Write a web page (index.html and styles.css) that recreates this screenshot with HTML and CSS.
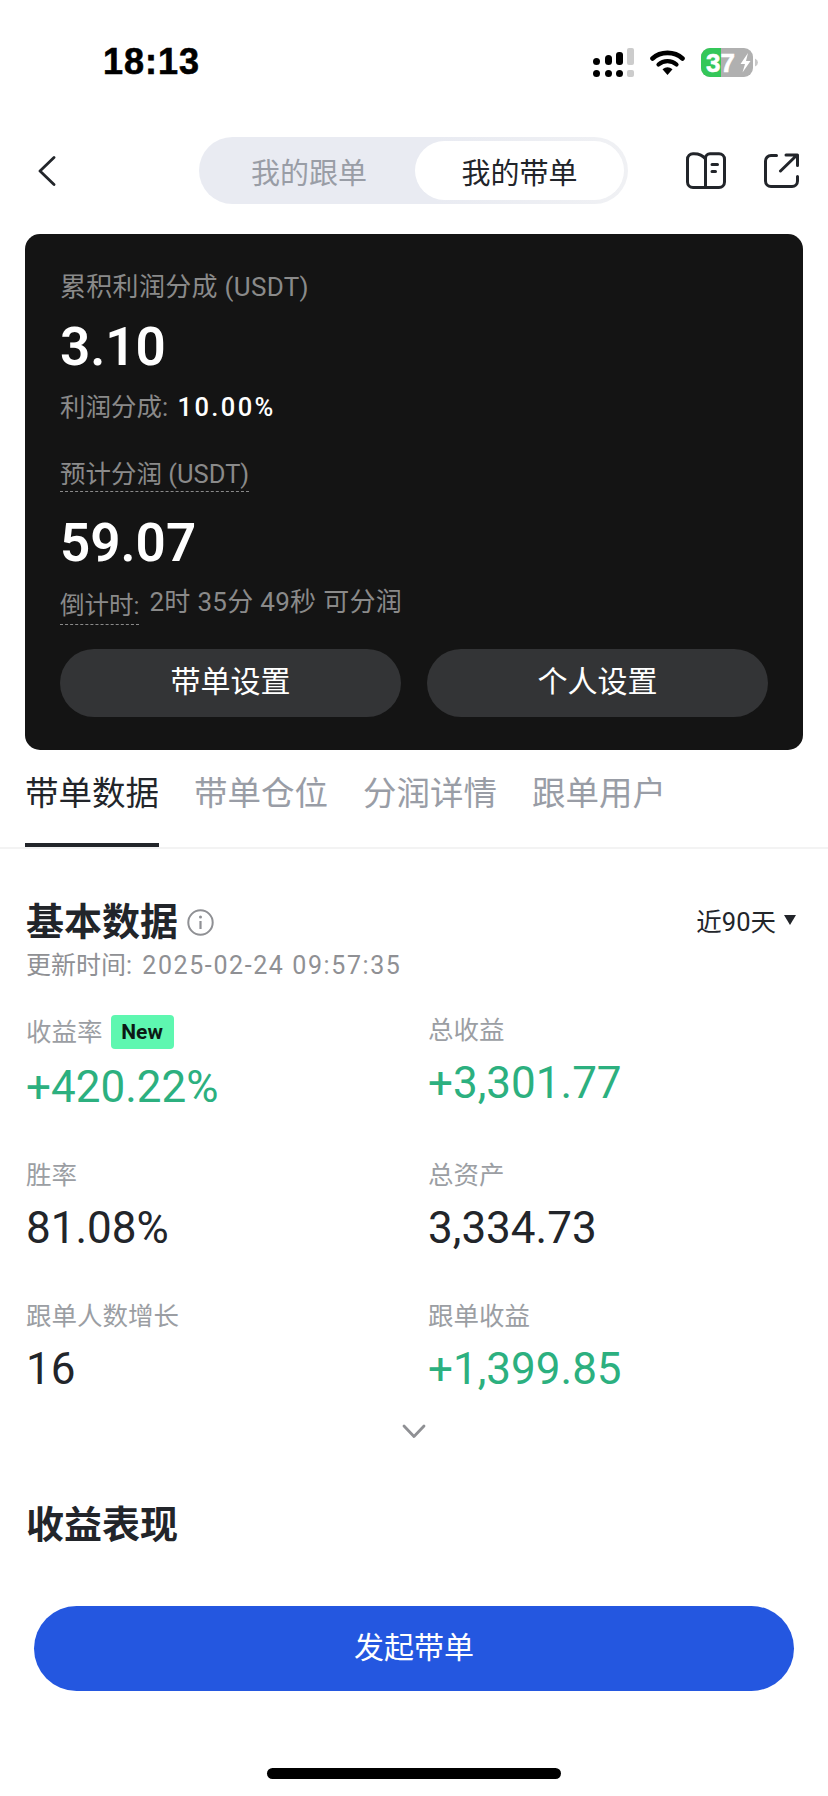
FILE: index.html
```html
<!DOCTYPE html>
<html lang="zh">
<head>
<meta charset="utf-8">
<title>我的带单</title>
<link rel="stylesheet" href="styles.css">
</head>
<body>
<div class="page">
  <div class="status">
    <span class="time">18:13</span>
    <div class="status-icons">
      <svg class="signal" width="41" height="29" viewBox="0 0 41 29">
        <rect x="0" y="10" width="7" height="7" rx="3.5" fill="#000"/><rect x="12" y="7" width="7" height="10" rx="3.5" fill="#000"/><rect x="23" y="4" width="7" height="13" rx="3" fill="#000"/><rect x="34" y="0" width="7" height="17" rx="2" fill="#ccc"/>
        <rect x="0" y="22" width="7" height="7" rx="3.5" fill="#000"/><rect x="12" y="22" width="7" height="7" rx="3.5" fill="#000"/><rect x="23" y="22" width="7" height="7" rx="3.5" fill="#000"/><rect x="34" y="22" width="7" height="7" rx="2" fill="#ccc"/>
      </svg>
      <svg class="wifi" width="35" height="26" viewBox="0 0 35 26">
        <path d="M2.5 9.5C10.5 2 24.500 2 32.500 9.500" fill="none" stroke="#000" stroke-width="4.600" stroke-linecap="round"/>
        <path d="M8.500 15.500C13.500 11 21.500 11 26.500 15.500" fill="none" stroke="#000" stroke-width="4.200" stroke-linecap="round"/>
        <path d="M12.500 20.200Q17.500 16.400 22.500 20.200L17.500 26Z" fill="#000"/>
      </svg>
      <svg class="battery" width="58" height="29" viewBox="0 0 58 29">
        <rect x="0" y="0" width="52" height="29" rx="9" fill="#b0b0b0"/>
        <path d="M9 0H20V29H9A9 9 0 0 1 0 20V9A9 9 0 0 1 9 0Z" fill="#34c759"/>
        <path d="M54 10.500Q57 12 57 14.500T54 18.500Z" fill="#c8c8c8"/>
        <text class="bat-text" x="5" y="24">37</text>
        <path d="M47 5L39.500 16H44L41.500 24.500L49.500 13H45Z" fill="#fff"/>
      </svg>
    </div>
  </div>

  <div class="nav">
    <svg class="back" width="18" height="30" viewBox="0 0 18 30"><path d="M16 1.500L2 15L16 28.500" fill="none" stroke="#22252a" stroke-width="2.800" stroke-linecap="round" stroke-linejoin="round"/></svg>
    <div class="switch">
      <span class="switch-item">我的跟单</span>
      <span class="switch-item switch-active">我的带单</span>
    </div>
    <div class="nav-icons">
      <svg width="40" height="37" viewBox="0 0 40 37"><path d="M19.500 7C17 3.500 13 1.700 8 1.700H7A5.500 5.500 0 0 0 1.500 7.200V30A5.500 5.500 0 0 0 7 35.500H33A5.500 5.500 0 0 0 38.500 30V7.200A5.500 5.500 0 0 0 33 1.700H24A4.500 4.500 0 0 0 19.500 6.200V35.500" fill="none" stroke="#22252a" stroke-width="3" stroke-linejoin="round"/><path d="M26 12.500H31.500M26 19.500H29.500" stroke="#22252a" stroke-width="3" stroke-linecap="round"/></svg>
      <svg width="35" height="35" viewBox="0 0 35 35"><path d="M12.500 2.500H7A5.500 5.500 0 0 0 1.500 8V28A5.500 5.500 0 0 0 7 33.500H28A5.500 5.500 0 0 0 33.500 28V23.500" fill="none" stroke="#22252a" stroke-width="3" stroke-linecap="round"/><path d="M16.500 18L33 2M22 2H33.500V12.500" fill="none" stroke="#22252a" stroke-width="3" stroke-linecap="round" stroke-linejoin="round"/></svg>
    </div>
  </div>

  <section class="card">
    <div class="card-label label-top">累积利润分成 (USDT)</div>
    <div class="card-value">3.10</div>
    <div class="card-label share">利润分成: <b class="share-val">10.00%</b></div>
    <div class="card-label dashed est">预计分润 (USDT)</div>
    <div class="card-value est-val">59.07</div>
    <div class="countdown">
      <span class="card-label dashed count-label">倒计时:</span>
      <span class="card-label count-text">2时 35分 49秒 可分润</span>
    </div>
    <div class="card-btns">
      <button class="card-btn">带单设置</button>
      <button class="card-btn">个人设置</button>
    </div>
  </section>

  <nav class="tabs">
    <span class="tab tab-active">带单数据</span>
    <span class="tab">带单仓位</span>
    <span class="tab">分润详情</span>
    <span class="tab">跟单用户</span>
  </nav>

  <section class="section">
    <div class="title-row">
      <h2 class="title">基本数据</h2>
      <svg class="info" width="27" height="27" viewBox="0 0 27 27"><circle cx="13.500" cy="13.500" r="12.200" fill="none" stroke="#8f9094" stroke-width="2"/><path d="M13.500 12V20" stroke="#8f9094" stroke-width="2.200"/><circle cx="13.500" cy="8" r="1.500" fill="#8f9094"/></svg>
      <div class="range">近90天<span class="caret"></span></div>
    </div>
    <div class="updated">更新时间: <span class="stamp">2025-02-24 09:57:35</span></div>
    <div class="stats">
      <div class="stat">
        <div class="stat-label rate-label">收益率<span class="badge">New</span></div>
        <div class="stat-value up rate-value">+420.22%</div>
      </div>
      <div class="stat">
        <div class="stat-label">总收益</div>
        <div class="stat-value up">+3,301.77</div>
      </div>
      <div class="stat">
        <div class="stat-label">胜率</div>
        <div class="stat-value">81.08%</div>
      </div>
      <div class="stat">
        <div class="stat-label">总资产</div>
        <div class="stat-value">3,334.73</div>
      </div>
      <div class="stat">
        <div class="stat-label">跟单人数增长</div>
        <div class="stat-value">16</div>
      </div>
      <div class="stat">
        <div class="stat-label">跟单收益</div>
        <div class="stat-value up">+1,399.85</div>
      </div>
    </div>
    <svg class="more" width="24" height="15" viewBox="0 0 24 15"><path d="M2 2L12 12.500L22 2" fill="none" stroke="#8f9094" stroke-width="2.800" stroke-linecap="round" stroke-linejoin="round"/></svg>
    <h2 class="title perf">收益表现</h2>
  </section>

  <button class="cta">发起带单</button>
  <div class="home-bar"></div>
</div>
</body>
</html>
```
FILE: styles.css
```css
* { box-sizing: border-box; }
html, body { margin: 0; padding: 0; background: #fff; }
body { font-family: Roboto, "Noto Sans CJK SC", sans-serif; color: #22252a; }
.page { width: 828px; height: 1796px; overflow: hidden; display: flex; flex-direction: column; }

.status { height: 124px; display: flex; align-items: center; justify-content: space-between; padding: 0 69px 0 103px; flex: none; }
.time { font-family: "Liberation Sans", sans-serif; font-weight: 700; font-size: 36px; letter-spacing: 1px; color: #000; -webkit-text-stroke: 0.6px #000; }
.status-icons { display: flex; align-items: center; gap: 16px; }
.bat-text { font-family: "Liberation Sans", sans-serif; font-weight: 700; font-size: 26px; fill: #fff; stroke: #fff; stroke-width: 0.6px; }

.nav { height: 67px; margin-top: 13px; display: flex; align-items: center; padding: 0 29px 0 38px; flex: none; }
.back { flex: none; }
.switch { margin-left: 143px; width: 429px; height: 67px; border-radius: 34px; background: linear-gradient(90deg, #e9ebf2 0%, #e9ebf2 55%, #f0f1f4 100%); padding: 4px; display: flex; flex: none; }
.switch-item { flex: 1; display: flex; align-items: center; justify-content: center; font-size: 29px; color: #999da6; border-radius: 30px; height: 59px; }
.switch-active { flex: none; width: 209px; background: #fff; color: #22252a; }
.nav-icons { margin-left: 58px; display: flex; align-items: center; gap: 38px; }

.card { flex: none; margin: 30px 25px 0 25px; height: 516px; background: #141414; border-radius: 15px; padding: 35px 35px 0 35px; }
.card-label { font-size: 25.5px; line-height: 36px; color: #8a8a8a; }
.label-top { font-size: 26px; letter-spacing: 0.3px; }
.card-value { font-size: 53px; line-height: 60px; font-weight: 600; color: #fff; margin-top: 12px; }
.share { margin-top: 12px; }
.share-val { font-weight: 500; color: #fff; letter-spacing: 2.4px; margin-left: 3px; }
.dashed { display: inline-block; line-height: 33px; border-bottom: 1px dashed #8a8a8a; }
.est { display: block; width: fit-content; margin-top: 33px; }
.est-val { margin-top: 21px; }
.countdown { display: flex; margin-top: 15px; align-items: flex-start; gap: 10px; }
.count-label { font-size: 24.5px; line-height: 36px; }
.count-text { margin-top: -4px; font-size: 26px; letter-spacing: 0.3px; }
.card-btns { display: flex; gap: 26px; margin-top: 24px; }
.card-btn { flex: 1; height: 68px; border: 0; border-radius: 34px; background: #333436; color: #fff; font-family: inherit; font-size: 30px; line-height: 64px; padding: 0 0 2px; }

.tabs { flex: none; height: 99px; display: flex; gap: 35px; padding: 0 25px; border-bottom: 2px solid #f3f3f3; }
.tab { height: 97px; width: 134px; padding-top: 21px; font-size: 33.5px; line-height: 46px; color: #999da6; text-align: center; white-space: nowrap; }
.tab-active { color: #22252a; border-bottom: 4px solid #22252a; }

.section { flex: none; padding: 0 26px 0 26px; }
.title-row { display: flex; align-items: center; margin-top: 48px; height: 50px; }
.title { margin: 0; font-size: 38px; line-height: 50px; font-weight: 700; color: #22252a; }
.info { margin-left: 9px; }
.range { margin-left: auto; font-size: 25.5px; color: #22252a; display: flex; align-items: center; gap: 8px; margin-right: 6px; margin-top: -5px; }
.caret { width: 0; height: 0; border-left: 6px solid transparent; border-right: 6px solid transparent; border-top: 10px solid #22252a; }
.updated { margin-top: 1px; font-size: 25px; line-height: 36px; color: #8f9094; }
.stamp { letter-spacing: 1.6px; margin-left: 4px; }

.stats { display: grid; grid-template-columns: 402px 1fr; row-gap: 47px; margin-top: 30px; }
.stat-label { font-size: 25.5px; line-height: 32px; color: #9b9ea3; }
.rate-label { display: flex; align-items: center; height: 36px; line-height: 36px; }
.badge { margin-left: 8px; width: 63px; height: 34px; border-radius: 4px; background: #5ef7b0; color: #0c1a14; font-size: 21px; font-weight: 700; line-height: 34px; text-align: center; }
.stat-value { margin-top: 12px; font-size: 44px; line-height: 50px; font-weight: 400; color: #22252a; }
.rate-value { margin-top: 12px; }
.up { color: #2cb07f; }

.more { display: block; margin: 30px auto 0; }
.perf { margin-top: 61px; }

.cta { flex: none; margin: 56px 0 0 34px; width: 760px; height: 85px; border: 0; border-radius: 43px; background: #2457e0; color: #fff; font-family: inherit; font-size: 30px; line-height: 81px; padding: 0 0 2px; }
.home-bar { flex: none; margin: 77px 0 0 267px; width: 294px; height: 11px; border-radius: 5.5px; background: #000; }
```
